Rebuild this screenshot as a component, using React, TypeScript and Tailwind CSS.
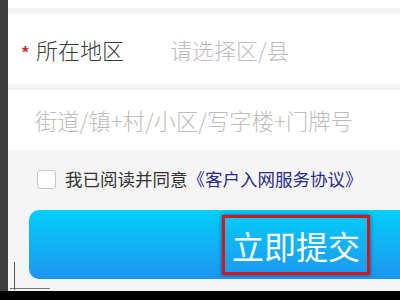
import React from 'react';

const cjk = { fontFamily: '"Noto Sans CJK SC", "Noto Sans", sans-serif' };

export default function App() {
  return (
    <div className="relative flex h-[300px] w-[400px] flex-col overflow-hidden bg-black" style={cjk}>
      <div className="flex h-[291px]">
        <div className="w-[8px] shrink-0 bg-[#3d3d3d]" />
        <div className="flex flex-1 flex-col bg-white">
          <div className="h-[8px]" />
          <div className="h-[6px] bg-[#f4f4f4]" />
          {/* region row */}
          <div className="flex h-[70px] items-center">
            <span className="ml-[14px] mt-[6px] w-[14px] text-[17px] font-bold leading-none text-[#c62a2f]" style={{ fontFamily: '"Liberation Sans", sans-serif' }}>
              *
            </span>
            <span className="text-[22px] font-light leading-none text-[#3a3a3a]">所在地区</span>
            <span className="ml-[46px] text-[22px] font-light leading-none text-[#bdbdbd]">请选择区/县</span>
          </div>
          <div className="h-[6px] bg-[#f4f4f4]" />
          {/* address row */}
          <div className="flex h-[60px] items-center pl-[27px]">
            <span className="text-[22.3px] font-light leading-none text-[#bdbdbd]">街道/镇+村/小区/写字楼+门牌号</span>
          </div>
          {/* agreement + submit */}
          <div className="flex flex-1 flex-col bg-[#f5f5f5] pl-[21px]">
            <div className="flex h-[58px] items-center">
              <div className="ml-[8px] h-[19px] w-[19px] rounded-[3px] border border-[#c8c8c8] bg-white" />
              <span className="ml-[9px] text-[17.5px] leading-none text-[#333]">我已阅读并同意</span>
              <span className="text-[17.5px] leading-none text-[#2c2c88]">《客户入网服务协议》</span>
            </div>
            <div className="mt-[2px] flex h-[69px] items-center rounded-l-[10px] bg-gradient-to-b from-[#03cefb] to-[#1c96ee] pl-[193px]">
              <div className="flex h-[60px] w-[148px] items-center justify-center border-[3px] border-[#d8141c] shadow-[0_0_4px_rgba(0,0,0,0.5)]">
                <span className="text-[32px] leading-none text-white">立即提交</span>
              </div>
            </div>
          </div>
        </div>
      </div>
      <div className="absolute left-[14px] top-[262px] h-[28px] w-px bg-[#555]" />
      <div className="absolute left-[10px] top-[288px] h-px w-[40px] bg-[#777]" />
    </div>
  );
}
